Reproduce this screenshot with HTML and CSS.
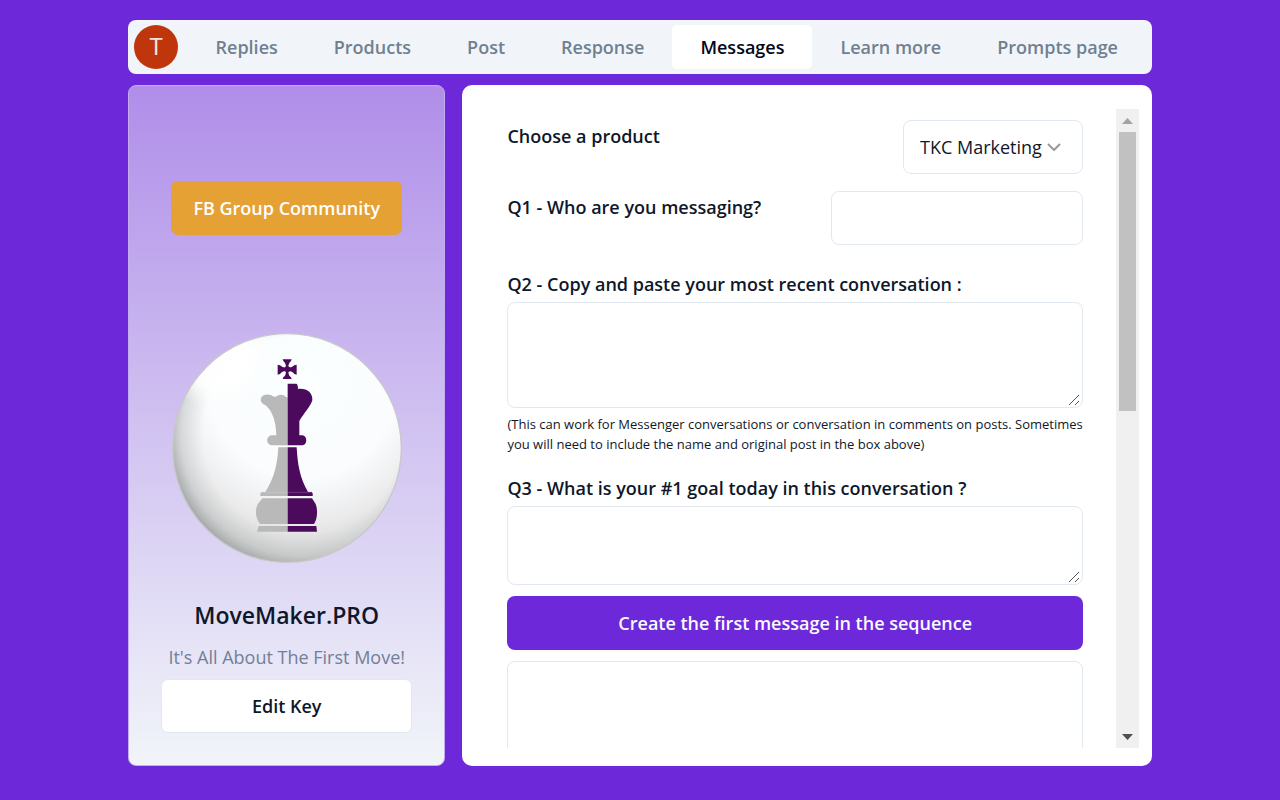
FILE: index.html
```html
<!DOCTYPE html>
<html lang="en">
<head>
    <meta charset="UTF-8">
    <meta name="viewport" content="width=device-width, initial-scale=1.0">
    <title>MoveMaker.PRO</title>
    <link rel="stylesheet" href="styles.css">
</head>
<body>
<div class="page">
    <nav class="navbar">
        <button class="avatar" type="button">T</button>
        <a href="#" class="tab">Replies</a>
        <a href="#" class="tab">Products</a>
        <a href="#" class="tab">Post</a>
        <a href="#" class="tab">Response</a>
        <a href="#" class="tab active">Messages</a>
        <a href="#" class="tab">Learn more</a>
        <a href="#" class="tab">Prompts page</a>
    </nav>

    <div class="content">
        <aside class="sidebar">
            <a href="#" class="community-button">FB Group Community</a>
            <svg class="logo" viewBox="39 39 690 690" aria-hidden="true">
                <defs>
                    <radialGradient id="ball" gradientUnits="userSpaceOnUse" cx="430" cy="190" r="590">
                        <stop offset="0" stop-color="#fbffff"/>
                        <stop offset="0.48" stop-color="#fafcfd"/>
                        <stop offset="0.7" stop-color="#ebebec"/>
                        <stop offset="0.88" stop-color="#d8d8d8"/>
                        <stop offset="1" stop-color="#c8c9c9"/>
                    </radialGradient>
                    <radialGradient id="shade" gradientUnits="userSpaceOnUse" cx="430" cy="345" r="403">
                        <stop offset="0.74" stop-color="#a5abab" stop-opacity="0"/>
                        <stop offset="0.9" stop-color="#a0a6a6" stop-opacity="0.3"/>
                        <stop offset="1" stop-color="#858c8c" stop-opacity="0.65"/>
                    </radialGradient>
                    <radialGradient id="shine" gradientUnits="userSpaceOnUse" cx="170" cy="100" r="165">
                        <stop offset="0" stop-color="#ffffff"/>
                        <stop offset="0.6" stop-color="#ffffff" stop-opacity="0.9"/>
                        <stop offset="1" stop-color="#ffffff" stop-opacity="0"/>
                    </radialGradient>
                </defs>
                <circle cx="384" cy="384" r="343" fill="url(#ball)"/>
                <circle cx="384" cy="384" r="343" fill="url(#shade)"/>
                <circle cx="384" cy="384" r="343" fill="url(#shine)"/>
                <circle cx="384" cy="384" r="343" fill="none" stroke="#c9c7cb" stroke-width="4"/>
                <!-- cross -->
                <path d="M371 118H398L396 123Q388 129 388 143Q400 143 406 136L413 134V164L406 162Q400 153 388 153Q388 167 396 172L398 177H371L373 172Q381 167 381 153Q369 153 363 162L356 164V134L363 136Q369 143 381 143Q381 129 373 123Z" fill="#4c0a5c"/>
                <circle cx="385" cy="148" r="9" fill="#4c0a5c"/>
                <!-- queen half -->
                <g fill="#b9b9b9">
                    <path d="M386 231Q380 233 378 228Q366 220 354 228Q350 232 342 229Q336 223 320 224C309 224 302 236 307 246Q311 254 322 257C340 275 351 302 352 346H338C320 348 320 374 338 376H386Z"/>
                    <path d="M358 382H386V528H304Q302 519 308 516H319C346 474 355 434 358 382Z"/>
                    <path d="M310 535H386V612H303C289 596 287 568 297 551Z"/>
                    <path d="M299 618H386V635H294Z"/>
                </g>
                <!-- king half -->
                <g fill="#4c0a5c">
                    <path d="M386 191H412Q417 193 417 207C441 203 462 217 460 241C456 257 436 278 421 303V346H430C446 348 446 375 430 376H386Z"/>
                    <path d="M386 382H413C416 434 422 472 447 516H458Q463 519 461 528H386Z"/>
                    <path d="M386 535H459L470 552C477 570 475 598 465 612H386Z"/>
                    <path d="M386 618H472L474 635H386Z"/>
                </g>
                <path d="M386 517H458" stroke="#80508a" stroke-width="2"/>
                <path d="M308 517H386" stroke="#cfcfcf" stroke-width="2"/>
            </svg>
            <h1 class="brand">MoveMaker.PRO</h1>
            <p class="slogan">It's All About The First Move!</p>
            <button class="edit-button" type="button">Edit Key</button>
        </aside>

        <main class="card">
            <form class="message-form">
                <div class="form-row">
                    <label for="product">Choose a product</label>
                    <select id="product" class="field product-select">
                        <option>TKC Marketing</option>
                    </select>
                </div>
                <div class="form-row">
                    <label for="person">Q1 - Who are you messaging?</label>
                    <input type="text" id="person" class="field person-input">
                </div>
                <div class="form-group">
                    <label for="conversation">Q2 - Copy and paste your most recent conversation :</label>
                    <textarea id="conversation" class="field conversation-box"></textarea>
                    <p class="hint">(This can work for Messenger conversations or conversation in comments on posts. Sometimes you will need to include the name and original post in the box above)</p>
                </div>
                <div class="form-group">
                    <label for="goal">Q3 - What is your #1 goal today in this conversation ?</label>
                    <textarea id="goal" class="field goal-box"></textarea>
                </div>
                <button class="create-button" type="button">Create the first message in the sequence</button>
                <textarea class="field result-box" aria-label="Message"></textarea>
            </form>
            <div class="scrollbar">
                <button class="scroll-button" type="button" aria-label="Scroll up">
                    <svg width="11" height="6" viewBox="0 0 11 6"><path d="M0 6L5.5 0L11 6Z" fill="#a3a3a3"/></svg>
                </button>
                <div class="scroll-track">
                    <div class="scroll-thumb"></div>
                </div>
                <button class="scroll-button" type="button" aria-label="Scroll down">
                    <svg width="11" height="6" viewBox="0 0 11 6"><path d="M0 0L5.5 6L11 0Z" fill="#505050"/></svg>
                </button>
            </div>
        </main>
    </div>
</div>
</body>
</html>
```

FILE: styles.css
```css
* {
    box-sizing: border-box;
}
body {
    margin: 0;
    background-color: #6d28d9;
    color: #0f172a;
    font-family: "Open Sans", sans-serif;
    font-size: 18px;
    line-height: 28px;
}
button, input, select, textarea {
    font: inherit;
    color: inherit;
}
.page {
    display: flex;
    flex-direction: column;
    gap: 11px;
    width: 80%;
    height: 100vh;
    margin: 0 auto;
    padding: 20px 0 34px;
}
.navbar {
    display: flex;
    align-items: center;
    padding: 5px 6px;
    background-color: #f1f5f9;
    border-radius: 8px;
}
.avatar {
    width: 44px;
    height: 44px;
    margin-right: auto;
    padding: 0;
    border: none;
    border-radius: 50%;
    background-color: #bf360c;
    color: #f1e4e0;
    font-family: Roboto, sans-serif;
    font-size: 23px;
    line-height: 46px;
    cursor: pointer;
}
.tab {
    padding: 8px 28px;
    border-radius: 5px;
    color: #708090;
    font-weight: 600;
    text-decoration: none;
}
.tab.active {
    background-color: #ffffff;
    color: #020617;
}
.content {
    display: flex;
    flex: 1;
    gap: 17px;
    min-height: 0;
}
.sidebar {
    display: flex;
    flex-direction: column;
    align-items: center;
    justify-content: flex-end;
    width: 31%;
    padding: 32px;
    border: 1px solid #c3adee;
    border-radius: 8px;
    background: linear-gradient(#b08ee9, #f1f5f9);
}
.community-button {
    padding: 13px 22px;
    border-radius: 7px;
    background-color: #e6a135;
    color: #ffffff;
    font-weight: 600;
    text-decoration: none;
}
.logo {
    width: 230px;
    height: 230px;
    margin: 98px 0 36px;
}
.brand {
    margin: 0 0 11px;
    font-size: 23px;
    font-weight: 600;
    line-height: 33px;
}
.slogan {
    margin: 0 0 8px;
    color: #718096;
}
.edit-button {
    width: 100%;
    padding: 12px;
    border: 1px solid #e2e8f0;
    border-radius: 7px;
    background-color: #ffffff;
    font-weight: 600;
    cursor: pointer;
}
.card {
    display: flex;
    flex: 1;
    min-width: 0;
    padding: 24px 13px 18px 12px;
    border-radius: 10px;
    background-color: #ffffff;
}
.message-form {
    flex: 1;
    padding: 11px 33px 0;
    overflow-y: auto;
    scrollbar-width: none;
}
.scrollbar {
    display: flex;
    flex-direction: column;
    width: 23px;
    background-color: #f0f0f0;
}
.scroll-button {
    display: flex;
    align-items: center;
    justify-content: center;
    height: 23px;
    padding: 0;
    border: none;
    background: none;
}
.scroll-track {
    flex: 1;
    padding: 0 3px;
}
.scroll-thumb {
    height: 47%;
    background-color: #c1c1c1;
}
label {
    font-weight: 600;
}
.form-row {
    display: flex;
    justify-content: space-between;
    margin-bottom: 17px;
}
.form-row label {
    padding-top: 2px;
}
.form-group {
    margin-bottom: 11px;
}
.field {
    display: block;
    border: 1px solid #e2e8f0;
    border-radius: 8px;
    background-color: #ffffff;
    outline: none;
}
.product-select {
    width: 180px;
    height: 54px;
    padding: 0 16px;
    appearance: none;
    background: #ffffff url("data:image/svg+xml,%3Csvg xmlns='http://www.w3.org/2000/svg' viewBox='0 0 14 8'%3E%3Cpath d='M1 1L7 7L13 1' fill='none' stroke='%23999999' stroke-width='2'/%3E%3C/svg%3E") right 21px center / 14px 8px no-repeat;
}
.person-input {
    width: 252px;
    height: 54px;
    padding: 0 16px;
    margin-bottom: 8px;
}
textarea.field {
    width: 100%;
    padding: 12px 16px;
    resize: vertical;
}
textarea::-webkit-resizer {
    background: url("data:image/svg+xml,%3Csvg xmlns='http://www.w3.org/2000/svg' viewBox='0 0 15 15'%3E%3Cpath d='M2 13L12 3M8 13L12 9' fill='none' stroke='%23555555'/%3E%3C/svg%3E") center / 15px 15px no-repeat;
}
.conversation-box {
    height: 106px;
    margin-top: 4px;
}
.goal-box {
    height: 79px;
    margin-top: 4px;
}
.hint {
    margin: 6px 0 20px;
    font-size: 13px;
    line-height: 20px;
}
.create-button {
    display: block;
    width: 100%;
    margin-bottom: 11px;
    padding: 13px;
    border: none;
    border-radius: 8px;
    background-color: #6d28d9;
    color: #f8fafc;
    font-weight: 600;
    cursor: pointer;
}
.result-box {
    height: 800px;
}
```
